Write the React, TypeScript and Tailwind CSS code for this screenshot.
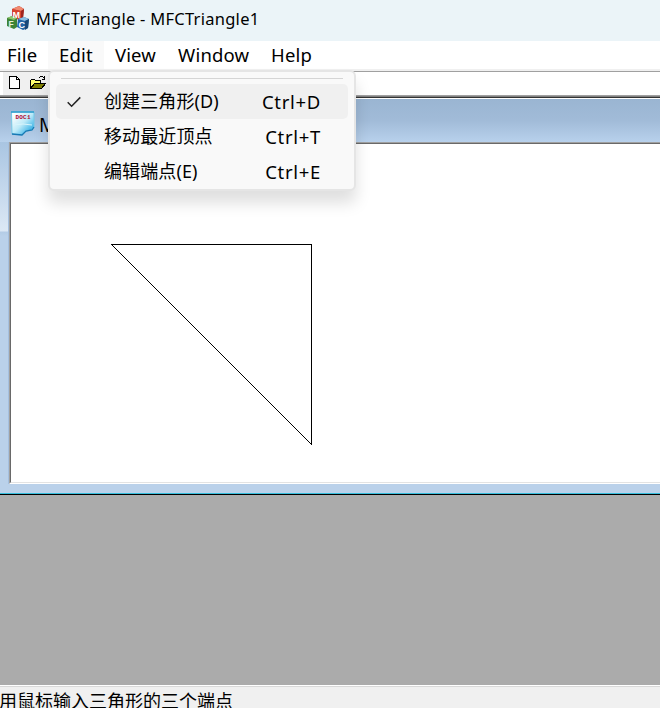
import React from "react";

const ui = "font-['Noto_Sans','Noto_Sans_CJK_SC',sans-serif]";

function AppIcon() {
  return (
    <svg className="ml-[7px] h-[24px] w-[22px] shrink-0" viewBox="0 0 22 24">
      <path d="M5 3 12 0 17 3 16 12 8 14 5 11Z" fill="#bd3028" />
      <path d="M5 3 12 0 17 3 14 5Z" fill="#f08a70" />
      <path d="M5 3 14 5 14 13 6 13Z" fill="#d8432f" />
      <path d="M14 5 17 3 16 12 14 13Z" fill="#9e2620" />
      <path d="M0 12 5 10 10 12 10 21 7 23 0 20Z" fill="#3d8436" />
      <path d="M0 12 5 10 10 12 7 14Z" fill="#8fc66a" />
      <path d="M11 13 17 11 22 13 21 22 16 24 10 21Z" fill="#2464a4" />
      <path d="M11 13 17 11 22 13 18 15Z" fill="#8cc0e4" />
      <path d="M18 15 22 13 21 22 18 24Z" fill="#174878" />
      <text x="5.6" y="12" fontSize="9" fontWeight="700" fill="#fff" fontFamily="Liberation Sans">M</text>
      <text x="1.5" y="20.5" fontSize="8.5" fontWeight="700" fill="#e8f4dc" fontFamily="Liberation Sans">F</text>
      <text x="11.5" y="22" fontSize="9" fontWeight="700" fill="#fff" fontFamily="Liberation Sans">C</text>
    </svg>
  );
}

function NewIcon() {
  return (
    <svg className="h-[13px] w-[11px]" viewBox="0 0 11 13" shapeRendering="crispEdges">
      <path d="M.5 .5H7.5L10.5 3.5V12.5H.5Z" fill="#fff" stroke="#000" />
      <path d="M7.5 .5V3.5H10.5" fill="none" stroke="#000" />
    </svg>
  );
}

function OpenIcon() {
  return (
    <svg className="h-[13px] w-[16px]" viewBox="0 0 16 13" shapeRendering="crispEdges">
      <path d="M.5 11.5V4.5L1.5 3.5H4.5L5.5 4.5H10.5V7.5" fill="#ffff70" stroke="#000" />
      <path d="M.5 12.5 4.5 7.5H15.5L11.5 12.5Z" fill="#808000" stroke="#000" />
      <path d="M8.5 1.5H9.5M9.5 .5H12.5L14.5 2.5M14.5 0V3.5H11.5" fill="none" stroke="#000" />
    </svg>
  );
}

function DocIcon() {
  return (
    <svg className="ml-[11px] mt-[12px] h-[26px] w-[24px] shrink-0" viewBox="0 0 24 26">
      <defs>
        <linearGradient id="paper" x1="0" y1="0" x2="1" y2="1">
          <stop offset=".1" stopColor="#fff" />
          <stop offset=".5" stopColor="#bdeaf8" />
          <stop offset=".8" stopColor="#48b8e8" />
          <stop offset="1" stopColor="#a5e0f5" />
        </linearGradient>
      </defs>
      <path d="M.5 1H23V16L21 19 15 20 11 24 1 23Z" fill="url(#paper)" stroke="#74c8e6" />
      <path d="M0 1H23" stroke="#2d9dcc" strokeWidth="1.5" />
      <path d="M1 23 11 24 15 20 21 19 23 16" fill="none" stroke="#1779b4" strokeWidth="1.3" />
      <path d="M2 14 12 13 21 14" stroke="#d8f5fc" fill="none" />
      <text x="4.5" y="7.5" fontSize="6" textLength="15" fontWeight="700" fill="#b00830" fontFamily="Liberation Mono">DOC1</text>
    </svg>
  );
}

const items = [
  { label: "创建三角形(D)", key: "Ctrl+D", checked: true },
  { label: "移动最近顶点", key: "Ctrl+T", checked: false },
  { label: "编辑端点(E)", key: "Ctrl+E", checked: false },
];

function EditMenu() {
  return (
    <div className="absolute left-[48px] top-[70px] h-[121px] w-[308px] rounded-[6px] border-2 border-[#e5e5e5] bg-[#f9f9f9] px-[6px] pt-[6px] shadow-[0_12px_16px_rgba(0,0,0,0.13)]">
      <div className="ml-[5px] h-px w-[282px] bg-[#d5d5d5]" />
      <div className="mt-[5px]">
        {items.map((item) => (
          <div key={item.key} className={`flex h-[35px] items-center rounded-[5px] text-[18px] text-black ${item.checked ? "bg-[#f0f0f0]" : ""}`}>
            <span className="w-[48px] shrink-0 pl-[11px]">
              {item.checked && (
                <svg className="h-[12px] w-[14px]" viewBox="0 0 14 12">
                  <path d="M.7 6.2 4.6 10.2 13.3 1.4" fill="none" stroke="#222" strokeWidth="1.5" />
                </svg>
              )}
            </span>
            <span className="flex-1 font-[380] tracking-[0.1px] whitespace-nowrap">{item.label}</span>
            <span className="mr-[27px] font-[380] text-[18.5px] tracking-[0.7px]">{item.key}</span>
          </div>
        ))}
      </div>
    </div>
  );
}

export default function App() {
  return (
    <div className={`relative flex h-[708px] w-[660px] flex-col overflow-hidden bg-[#ababab] text-black ${ui}`}>
      <header className="flex h-[41px] shrink-0 items-start bg-[#ebf4f8] pt-[6px]">
        <AppIcon />
        <h1 className="ml-[7px] text-[16.5px] leading-[26px] tracking-[0.27px] whitespace-nowrap">MFCTriangle - MFCTriangle1</h1>
      </header>
      <nav className="flex h-[28px] shrink-0 bg-white text-[18.5px] leading-[28px]">
        <span className="w-[48px] pl-[7px] tracking-[0.2px]">File</span>
        <span className="w-[56px] bg-[#f9f9f9] pl-[11px] tracking-[0.2px]">Edit</span>
        <span className="w-[63px] pl-[11px] tracking-[0.1px]">View</span>
        <span className="w-[93px] pl-[11px] tracking-[0.2px]">Window</span>
        <span className="pl-[11px] tracking-[0.2px]">Help</span>
      </nav>
      <div className="h-[2px] shrink-0 bg-[#f0f0f0]" />
      <div className="flex h-[24px] shrink-0 border-t border-[#a0a0a0] bg-white pl-[3px]">
        <div className="flex w-[200px] items-start gap-[10px] bg-[#f0f0f0] pl-[6px] pt-[4px]">
          <NewIcon />
          <OpenIcon />
        </div>
      </div>
      <div className="h-px shrink-0 bg-[#a0a0a0]" />
      <div className="h-px shrink-0 bg-[#808080]" />
      <div className="h-px shrink-0 bg-[#333]" />
      <main className="flex h-[397px] shrink-0 flex-col border-b border-black bg-[#bad1ea]">
        <div className="h-px shrink-0 bg-white" />
        <div className="flex h-[43px] shrink-0 bg-linear-to-b from-[#9ab5d2] via-[#a1bbd8] to-[#b8d1ec]">
          <DocIcon />
          <span className="ml-[4px] pt-[12px] text-[19px] leading-[28px] font-[380]">M</span>
        </div>
        <div className="flex h-[342px] shrink-0">
          <div className="w-[8px] shrink-0 bg-[linear-gradient(#a9c5e2_0,#dce8f5_89px,#b4cce6_90px,#bad1ea_94px)]" />
          <div className="w-px shrink-0 bg-[#a5c0df]" />
          <div className="flex-1 border-t border-l border-b border-[#a0a0a0] border-b-white bg-white">
            <div className="h-[340px] border-t border-l border-b border-[#696969] border-b-[#e3e3e3]">
              <svg className="ml-[100px] mt-[99px] h-[203px] w-[203px]" viewBox="0 0 203 203" shapeRendering="crispEdges">
                <path d="M.5 1.5H200.5V201.5Z" fill="none" stroke="#000" />
              </svg>
            </div>
          </div>
        </div>
        <div className="h-[9px] shrink-0" />
        <div className="h-px shrink-0 bg-[#35bddb]" />
      </main>
      <div className="h-[190px] shrink-0" />
      <footer className="h-[23px] shrink-0 overflow-hidden border-t border-white bg-[#f0f0f0]">
        <div className="h-px bg-[#d8d8d8]" />
        <p className="-ml-[1px] text-[18px] leading-[28px] font-[380] whitespace-nowrap">用鼠标输入三角形的三个端点</p>
      </footer>
      <EditMenu />
    </div>
  );
}
